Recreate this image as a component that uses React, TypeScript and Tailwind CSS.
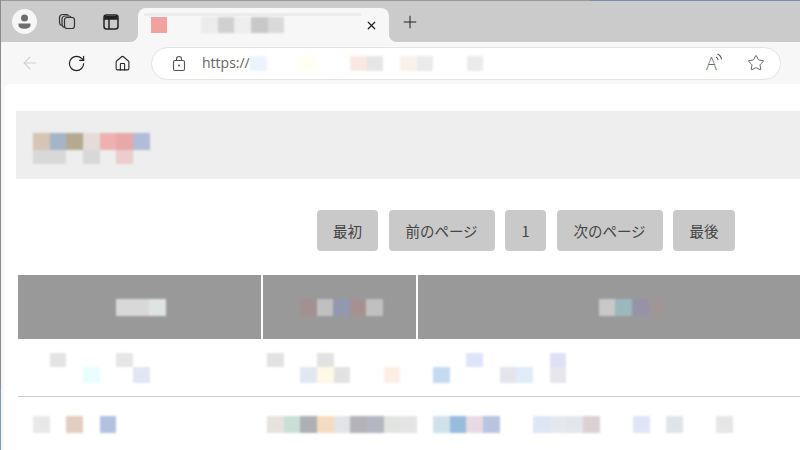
import React from 'react';
import { ArrowLeft, RotateCw, Home, Star, X, Plus } from 'lucide-react';

// blurred pixel blocks, '' leaves a gap
const Cells = ({ rows, heights }: { rows: string[][]; heights: string[] }) => (
  <div className="flex flex-col blur-[0.8px]">
    {rows.map((row, r) => (
      <div key={r} className={`flex ${heights[r]}`}>
        {row.map((color, i) => (
          <div key={i} className="w-[16.67px] shrink-0" style={{ backgroundColor: color || 'transparent' }} />
        ))}
      </div>
    ))}
  </div>
);

const PageButton = ({ label, width }: { label: string; width: string }) => (
  <button className={`${width} h-[41px] shrink-0 rounded-[4px] bg-[#c9c9c9] text-[14.5px] text-[#444] [font-family:'Noto_Sans_CJK_JP',sans-serif]`}>
    {label}
  </button>
);

const CollectionsIcon = () => (
  <svg width="20" height="20" viewBox="0 0 20 20" fill="none" stroke="#333" strokeWidth="1.2">
    <rect x="7.5" y="5.5" width="10" height="11" rx="2.5" />
    <path d="M7.5 15.5c-1.500-.4-2.500-1.500-2.500-3V7c0-1.800 1.400-3 3-3h4c1 0 1.800.4 2.300 1.400" />
    <path d="M4.600 13.500C3.400 12.900 2.500 11.800 2.500 10.500V6C2.500 4 4 2.500 6 2.500h3.500c.9 0 1.600.3 2.100 1" />
  </svg>
);

const VerticalTabsIcon = () => (
  <svg width="18" height="18" viewBox="0 0 18 18" fill="none" stroke="#222" strokeWidth="1.5">
    <rect x="2" y="2" width="14" height="14" rx="2.5" />
    <path d="M2 6h14M7 6v10" />
    <path d="M2.500 3h13v3h-13z" fill="#222" stroke="none" />
  </svg>
);

const ProfileIcon = () => (
  <div className="w-[25px] h-[25px] rounded-full bg-[#f6f6f6] flex items-center justify-center">
    <svg width="17" height="17" viewBox="0 0 17 17" fill="#6e6e6e">
      <circle cx="8.5" cy="5" r="3.5" />
      <path d="M2.500 10.500h12v1.500c0 2.500-2.500 3.800-6 3.800s-6-1.300-6-3.800z" />
    </svg>
  </div>
);

const LockIcon = () => (
  <svg width="14" height="17" viewBox="0 0 14 17" fill="none" stroke="#555" strokeWidth="1.1">
    <rect x="1.5" y="5.5" width="11" height="10" rx="1.5" />
    <path d="M4.500 5.500V3.800C4.500 2.400 5.600 1.500 7 1.500s2.500.9 2.500 2.300v1.700" />
    <circle cx="7" cy="10.500" r="1" fill="#555" stroke="none" />
  </svg>
);

const ReadAloud = () => (
  <div className="flex items-start w-[18px] h-[20px]">
    <span className="text-[18px] leading-[20px] font-light text-[#666] [font-family:'Open_Sans',sans-serif]">A</span>
    <svg className="-ml-[2px] shrink-0" width="8" height="11" viewBox="0 0 8 11" fill="none" stroke="#555" strokeWidth="1.1">
      <path d="M1 4c1.300.6 2 1.700 2.200 3.200M2.500 1c2.300.9 3.700 2.800 4 5.500" />
    </svg>
  </div>
);

const TabCorner = () => (
  <svg className="absolute -right-[8px] bottom-0" width="8" height="8" viewBox="0 0 8 8" fill="#f7f7f7">
    <path d="M0 0c0 4.500 3.500 8 8 8H0z" />
  </svg>
);

const TabCornerLeft = () => (
  <svg className="absolute -left-[8px] bottom-0" width="8" height="8" viewBox="0 0 8 8" fill="#f7f7f7">
    <path d="M8 0c0 4.500-3.500 8-8 8h8z" />
  </svg>
);

export default function App() {
  return (
    <div className="w-[800px] h-[450px] overflow-hidden flex bg-white [font-family:'Open_Sans',sans-serif]">
      <div className="w-px shrink-0 flex flex-col">
        <div className="h-[390px] bg-[#8c8c8c]" />
        <div className="flex-1 bg-[#7d9cba]" />
      </div>
      <div className="flex-1 min-w-0 flex flex-col">
        <div className="h-px flex shrink-0">
          <div className="w-[589px] bg-[#9a9a9a]" />
          <div className="flex-1 bg-[#7d8cab]" />
        </div>

        {/* tab strip */}
        <div className="h-[41px] shrink-0 bg-[#cbcbcb] flex items-center pl-[11px]">
          <ProfileIcon />
          <div className="ml-[20px] w-[20px] flex justify-center"><CollectionsIcon /></div>
          <div className="ml-[25px] w-[18px] flex justify-center"><VerticalTabsIcon /></div>
          <div className="relative ml-[18px] self-end w-[251px] h-[34px] bg-[#f7f7f7] rounded-t-[8px] flex items-start pl-[13px] pr-[11px]">
            <TabCornerLeft />
            <TabCorner />
            <div className="flex flex-col w-full">
              <div className="h-[3px] mt-[5px] w-[217px] -ml-[7px] bg-[#ececec]" />
              <div className="flex items-center mt-[1px] h-[16px]">
                <div className="w-[16px] h-[16px] bg-[#f1a29e] blur-[0.4px]" />
                <div className="ml-[34px]">
                  <Cells rows={[['#ececec', '#d0d0d0', '#eeeeee', '#c8c8c8', '#dadada']]} heights={['h-[16px]']} />
                </div>
                <X className="ml-auto" size={13} strokeWidth={2.2} color="#222" />
              </div>
            </div>
          </div>
          <Plus className="ml-[11px]" size={20} strokeWidth={1.2} color="#222" />
        </div>

        {/* toolbar */}
        <div className="h-[42px] shrink-0 bg-[#f7f7f7] flex items-center pl-[19px]">
          <ArrowLeft size={20} strokeWidth={1.3} color="#cfcfcf" />
          <RotateCw className="ml-[27px]" size={19} strokeWidth={1.5} color="#222" />
          <Home className="ml-[28px]" size={17} strokeWidth={1.5} color="#222" />
          <div className="ml-[20px] w-[630px] h-[33px] rounded-full bg-white border border-[#e3e3e3] flex items-center pl-[20px] pr-[15px]">
            <LockIcon />
            <span className="ml-[16px] text-[14px] leading-none text-[#666] w-[48px] shrink-0">https://</span>
            <Cells
              rows={[['#edf2ff', '', '', '#fffff4', '', '', '#f9e8e2', '#e6e6e6', '', '#f9f2ea', '#ebebeb', '', '', '#ebebeb']]}
              heights={['h-[15px]']}
            />
            <div className="ml-auto flex items-center gap-[23px]">
              <ReadAloud />
              <Star size={18} strokeWidth={1.2} color="#555" />
            </div>
          </div>
        </div>

        {/* page */}
        <div className="flex-1 min-h-0 bg-[#f7f7f7] pl-[3px]">
          <div className="h-full bg-white rounded-tl-[6px] pt-[27px] pl-[12px]">
            <div className="h-[68px] bg-[#eeeeee] pl-[17px] pt-[6px] flex items-center">
              <Cells
                rows={[
                  ['#d5c5b5', '#a5b5c8', '#b3aa90', '#e3dcd8', '#eeb0b0', '#e8a8a8', '#b0bcd8'],
                  ['#d8d8d8', '#d8d8d8', '', '#d8d8d8', '', '#eccccc'],
                ]}
                heights={['h-[17px]', 'h-[14px]']}
              />
            </div>

            <div className="mt-[31px] flex gap-[10.5px] pl-[301px]">
              <PageButton label="最初" width="w-[61px]" />
              <PageButton label="前のページ" width="w-[106px]" />
              <PageButton label="1" width="w-[41px]" />
              <PageButton label="次のページ" width="w-[106px]" />
              <PageButton label="最後" width="w-[62px]" />
            </div>

            {/* the third column runs on past the window edge */}
            <table className="mt-[24px] ml-[2px] w-[828px] table-fixed border-separate border-spacing-0">
              <thead>
                <tr className="h-[64px]">
                  <th className="w-[243px] p-0 bg-[#999999]">
                    <div className="flex justify-center pl-[3px] pt-[1px]">
                      <Cells rows={[['#d8d8d8', '#d8d8d8', '#dfe4e2']]} heights={['h-[17px]']} />
                    </div>
                  </th>
                  <th className="w-[155px] p-0 bg-[#999999] border-l-2 border-white">
                    <div className="flex justify-center pl-[4px] pt-[1px]">
                      <Cells rows={[['#a39090', '#c0c0c0', '#9298ae', '#a59290', '#c0c0c0']]} heights={['h-[17px]']} />
                    </div>
                  </th>
                  <th className="p-0 bg-[#999999] border-l-2 border-white">
                    <div className="flex justify-center pt-[1px]">
                      <Cells rows={[['#c8c8c8', '#9cb8bc', '#9792a8', '#a19696']]} heights={['h-[17px]']} />
                    </div>
                  </th>
                </tr>
              </thead>
              <tbody>
                <tr className="h-[58px]">
                  <td className="p-0 pl-[15px] pt-[14px] align-top border-b border-[#cccccc]">
                    <Cells
                      rows={[
                        ['', '#e4e4e4', '', '', '', '#e6e6e6'],
                        ['', '', '', '#e8feff', '', '', '#e3e6f2'],
                      ]}
                      heights={['h-[14px]', 'h-[16px]']}
                    />
                  </td>
                  <td className="p-0 pl-[6px] pt-[14px] align-top border-b border-[#cccccc]">
                    <Cells
                      rows={[
                        ['#e2e2e2', '', '', '#e2e2e2'],
                        ['', '', '#e2e8f2', '#fdf8e8', '#e2e2e2', '', '', '#fdeee4'],
                      ]}
                      heights={['h-[14px]', 'h-[16px]']}
                    />
                  </td>
                  <td className="p-0 pl-[17px] pt-[14px] align-top border-b border-[#cccccc]">
                    <Cells
                      rows={[
                        ['', '', '#e0e4f8', '', '', '', '', '#dfe0f6'],
                        ['#c4daf0', '', '', '', '#e4e4ec', '#e0ecf8', '', '#e6e6ec'],
                      ]}
                      heights={['h-[14px]', 'h-[16px]']}
                    />
                  </td>
                </tr>
                <tr className="h-[54px]">
                  <td className="p-0 pl-[15px] align-top pt-[19px]">
                    <Cells rows={[['#e8e8e8', '', '#e2cfc0', '', '#b4c0e0']]} heights={['h-[17px]']} />
                  </td>
                  <td className="p-0 pl-[6px] align-top pt-[19px]">
                    <Cells
                      rows={[['#e5e2e0', '#c8e0d8', '#aeb0b4', '#f5dcc0', '#e2e4e8', '#b4b4b8', '#b4b6c4', '#e2e4e0', '#e4e4e4']]}
                      heights={['h-[17px]']}
                    />
                  </td>
                  <td className="p-0 pl-[17px] align-top pt-[19px]">
                    <Cells
                      rows={[[
                        '#cfe2ea', '#98bcdc', '#e8dae4', '#b8c4e0', '', '', '#dde6f4', '#e6e8f0', '#e4e6ee', '#dcd0d4',
                        '', '', '#e0e4f6', '', '#e0e4ea', '', '', '#e6e6e6',
                      ]]}
                      heights={['h-[17px]']}
                    />
                  </td>
                </tr>
              </tbody>
            </table>
          </div>
        </div>
      </div>
    </div>
  );
}
